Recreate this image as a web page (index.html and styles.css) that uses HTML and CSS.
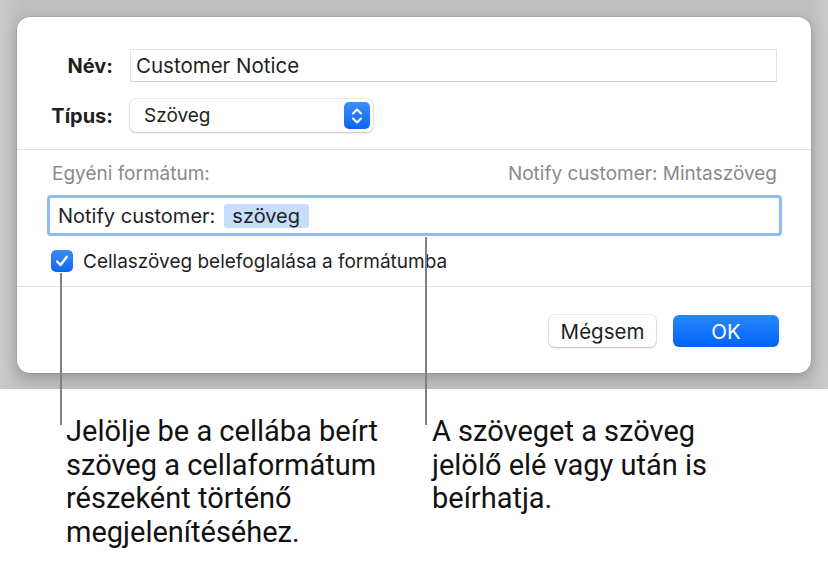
FILE: index.html
```html
<!DOCTYPE html>
<html lang="hu">
<head>
<meta charset="utf-8">
<title>Egyéni formátum</title>
<link rel="stylesheet" href="styles.css">
</head>
<body>
<div class="page">
  <div class="stage">
    <div class="dialog">
      <div class="sec-top">
        <div class="row">
          <span class="lbl">Név:</span>
          <div class="textfield">Customer Notice</div>
        </div>
        <div class="row">
          <span class="lbl">Típus:</span>
          <div class="popup">
            <span class="popup-text">Szöveg</span>
            <span class="stepper">
              <svg width="14" height="20" viewBox="0 0 14 20"><path d="M3 7.5 L7 3.5 L11 7.5 M3 12.5 L7 16.5 L11 12.5" fill="none" stroke="#fff" stroke-width="2" stroke-linecap="round" stroke-linejoin="round"/></svg>
            </span>
          </div>
        </div>
      </div>
      <div class="sec-mid">
        <div class="fmt-head">
          <span>Egyéni formátum:</span>
          <span>Notify customer: Mintaszöveg</span>
        </div>
        <div class="fmt-field">
          <span class="fmt-text">Notify customer:</span>
          <span class="token">szöveg</span>
        </div>
        <div class="check-row">
          <span class="checkbox">
            <svg width="16" height="16" viewBox="0 0 16 16"><path d="M3.2 8.6 L6.6 12 L12.8 3.8" fill="none" stroke="#fff" stroke-width="2.4" stroke-linecap="round" stroke-linejoin="round"/></svg>
          </span>
          <span class="check-label">Cellaszöveg belefoglalása a formátumba</span>
        </div>
      </div>
      <div class="sec-bot">
        <button class="btn btn-cancel">Mégsem</button>
        <button class="btn btn-ok">OK</button>
      </div>
    </div>
  </div>
  <div class="callouts">
    <p class="callout callout-left">Jelölje be a cellába beírt szöveg a cellaformátum részeként történő megjelenítéséhez.</p>
    <p class="callout callout-right">A szöveget a szöveg jelölő elé vagy után is beírhatja.</p>
  </div>
  <div class="leader leader-left"></div>
  <div class="leader leader-right"></div>
</div>
</body>
</html>
```
FILE: styles.css
```css
* { box-sizing: border-box; }
html, body { margin: 0; padding: 0; background: #fff; }
body { font-family: "Inter", "Liberation Sans", sans-serif; color: #1d1d1f; }
.page { position: relative; width: 828px; height: 561px; overflow: hidden; }

.stage {
  height: 389px;
  padding: 17px 17px 0 17px;
  background: linear-gradient(to right, #cacaca 0, #bfbfbf 20px, #bfbfbf 808px, #cacaca 828px);
}
.dialog {
  width: 794px;
  height: 356px;
  background: #fff;
  border-radius: 13px;
  box-shadow: 0 0 0 0.5px rgba(0,0,0,0.15), 0 4px 14px rgba(0,0,0,0.22);
  display: flex;
  flex-direction: column;
}

.sec-top {
  padding: 32px 34px 17px 0;
  border-bottom: 1px solid #e3e3e3;
  display: flex;
  flex-direction: column;
  gap: 17px;
}
.row { display: flex; align-items: center; gap: 17px; height: 33px; }
.lbl {
  width: 96px;
  text-align: right;
  font-weight: 700;
  font-size: 20px;
  color: #1f1f1f;
}
.textfield {
  flex: 1;
  height: 33px;
  border: 1px solid #e2e2e2;
  border-bottom-color: #cfcfcf;
  padding: 0 5px;
  font-size: 20.5px;
  line-height: 31px;
  color: #1f1f1f;
}
.popup {
  width: 243px;
  height: 33px;
  border-radius: 6px;
  background: #fff;
  box-shadow: 0 0 0 1px rgba(0,0,0,0.08), 0 1px 2px rgba(0,0,0,0.18);
  display: flex;
  align-items: center;
  justify-content: space-between;
  padding: 0 3px 0 14px;
}
.popup-text { font-size: 19px; color: #1f1f1f; }
.stepper {
  width: 26px;
  height: 27px;
  border-radius: 5px;
  background: linear-gradient(#3d8ff9, #0a66f2);
  display: flex;
  align-items: center;
  justify-content: center;
}

.sec-mid {
  padding: 13px 34px 14px 30px;
  border-bottom: 1px solid #e3e3e3;
  display: flex;
  flex-direction: column;
}
.fmt-head {
  display: flex;
  justify-content: space-between;
  padding-left: 5px;
  font-size: 19px;
  line-height: 22px;
  color: #8a8a8a;
}
.fmt-field {
  margin-top: 10px;
  margin-right: -5px;
  height: 41px;
  border: 3px solid #8fb9f7;
  border-radius: 4px;
  padding: 0 8px;
  display: flex;
  align-items: center;
  gap: 9px;
  font-size: 20px;
  color: #1f1f1f;
}
.token {
  background: #c6ddfb;
  border-radius: 3px;
  padding: 0 9px 0 8px;
  line-height: 24px;
}
.check-row {
  margin-top: 14px;
  padding-left: 4px;
  display: flex;
  align-items: center;
  gap: 10px;
  height: 22px;
}
.checkbox {
  width: 22px;
  height: 22px;
  border-radius: 5px;
  background: linear-gradient(#3a8cf8, #0d68f1);
  display: flex;
  align-items: center;
  justify-content: center;
}
.check-label { font-size: 19px; color: #1f1f1f; }

.sec-bot {
  flex: 1;
  padding: 28px 32px 0 0;
  display: flex;
  justify-content: flex-end;
  align-items: flex-start;
  gap: 17px;
}
.btn {
  height: 32px;
  border: none;
  border-radius: 6px;
  font-family: inherit;
  font-size: 20.5px;
  padding: 0;
}
.btn-cancel {
  width: 107px;
  background: #fff;
  color: #1f1f1f;
  box-shadow: 0 0 0 1px rgba(0,0,0,0.08), 0 1px 2px rgba(0,0,0,0.2);
}
.btn-ok {
  width: 106px;
  color: #fff;
  background: linear-gradient(#2a86ff, #0064f5);
}

.callouts {
  display: flex;
  padding: 26px 0 0 66px;
  font-family: "Roboto", "Liberation Sans", sans-serif;
  font-size: 29px;
  line-height: 33.5px;
  color: #111;
}
.callout { margin: 0; }
.callout-left { width: 340px; }
.callout-right { margin-left: 26px; width: 300px; }

.leader {
  position: absolute;
  width: 2px;
  background: #808080;
}
.leader-left { left: 60px; top: 273px; height: 152px; }
.leader-right { left: 425px; top: 237px; height: 188px; }
```
